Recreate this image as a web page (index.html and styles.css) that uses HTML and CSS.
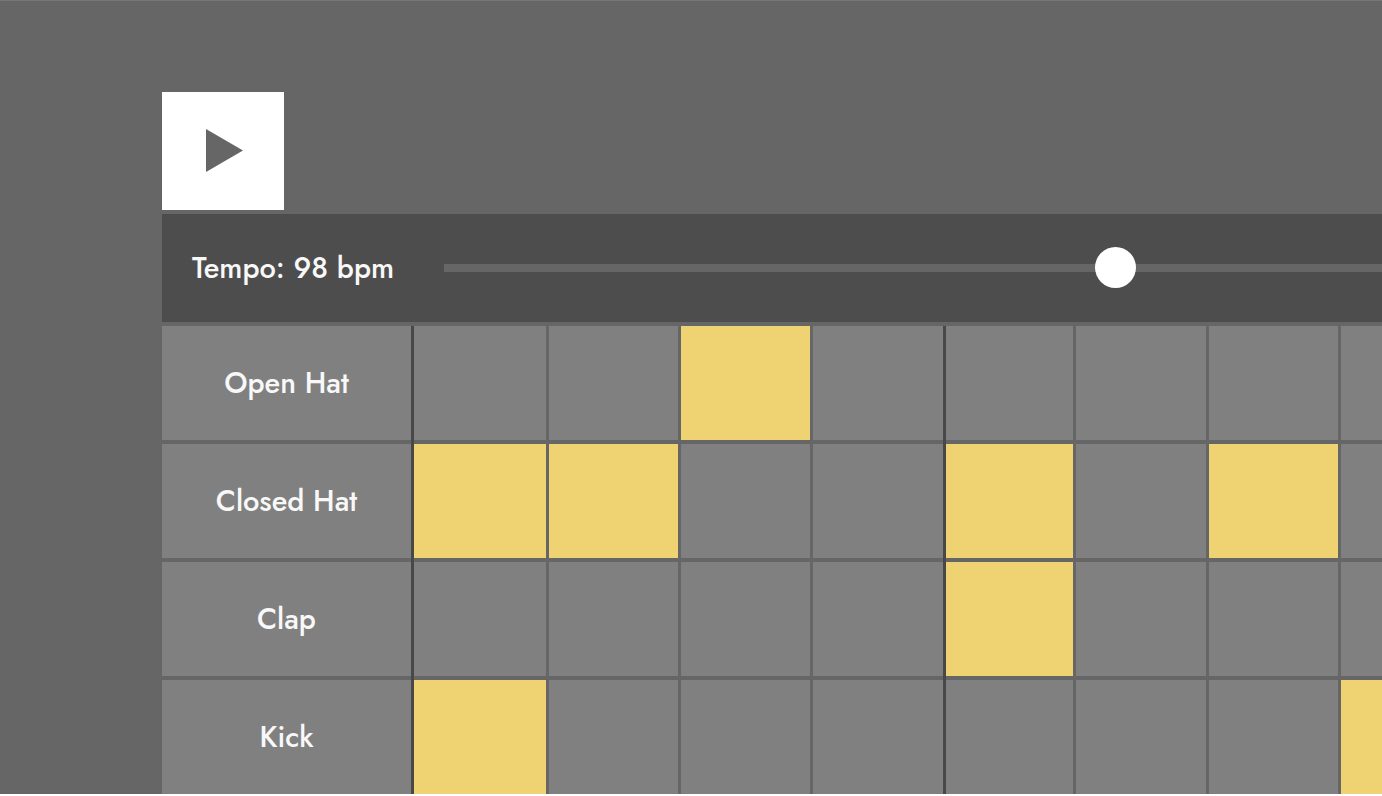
FILE: index.html
```html
<!DOCTYPE html>
<html lang="en">
<head>
<meta charset="utf-8">
<title>Drum Machine</title>
<link rel="stylesheet" href="styles.css">
</head>
<body>
<main class="machine">
  <button class="play" type="button" aria-label="Play">
    <svg class="play-icon" viewBox="0 0 37 43" aria-hidden="true"><path d="M0 0 37 21.5 0 43Z"/></svg>
  </button>
  <div class="tempo">
    <label class="tempo-label" for="tempo">Tempo: 98 bpm</label>
    <input class="tempo-slider" id="tempo" type="range" min="0" max="135" value="98">
  </div>
  <div class="grid">
    <div class="name">Open Hat</div>
    <button class="step beat" type="button" aria-label="Open Hat 1"></button>
    <button class="step" type="button" aria-label="Open Hat 2"></button>
    <button class="step on" type="button" aria-label="Open Hat 3"></button>
    <button class="step" type="button" aria-label="Open Hat 4"></button>
    <button class="step beat" type="button" aria-label="Open Hat 5"></button>
    <button class="step" type="button" aria-label="Open Hat 6"></button>
    <button class="step" type="button" aria-label="Open Hat 7"></button>
    <button class="step" type="button" aria-label="Open Hat 8"></button>

    <div class="name">Closed Hat</div>
    <button class="step beat on" type="button" aria-label="Closed Hat 1"></button>
    <button class="step on" type="button" aria-label="Closed Hat 2"></button>
    <button class="step" type="button" aria-label="Closed Hat 3"></button>
    <button class="step" type="button" aria-label="Closed Hat 4"></button>
    <button class="step beat on" type="button" aria-label="Closed Hat 5"></button>
    <button class="step" type="button" aria-label="Closed Hat 6"></button>
    <button class="step on" type="button" aria-label="Closed Hat 7"></button>
    <button class="step" type="button" aria-label="Closed Hat 8"></button>

    <div class="name">Clap</div>
    <button class="step beat" type="button" aria-label="Clap 1"></button>
    <button class="step" type="button" aria-label="Clap 2"></button>
    <button class="step" type="button" aria-label="Clap 3"></button>
    <button class="step" type="button" aria-label="Clap 4"></button>
    <button class="step beat on" type="button" aria-label="Clap 5"></button>
    <button class="step" type="button" aria-label="Clap 6"></button>
    <button class="step" type="button" aria-label="Clap 7"></button>
    <button class="step" type="button" aria-label="Clap 8"></button>

    <div class="name">Kick</div>
    <button class="step beat on" type="button" aria-label="Kick 1"></button>
    <button class="step" type="button" aria-label="Kick 2"></button>
    <button class="step" type="button" aria-label="Kick 3"></button>
    <button class="step" type="button" aria-label="Kick 4"></button>
    <button class="step beat" type="button" aria-label="Kick 5"></button>
    <button class="step" type="button" aria-label="Kick 6"></button>
    <button class="step" type="button" aria-label="Kick 7"></button>
    <button class="step on" type="button" aria-label="Kick 8"></button>
  </div>
</main>
</body>
</html>
```

FILE: styles.css
```css
* {
  box-sizing: border-box;
}

body {
  margin: 0;
  background: #fff;
  color: #f8f8f8;
  font-family: Futura, "Futura PT", Jost, Lato, sans-serif;
  font-size: 29px;
  font-weight: 500;
  line-height: 36px;
}

.machine {
  display: flex;
  flex-direction: column;
  gap: 4px;
  padding: 91px 0 0 162px;
  border-top: 1px solid #777;
  background: #666;
  overflow: hidden;
}

.play {
  display: flex;
  align-items: center;
  justify-content: center;
  width: 122px;
  height: 118px;
  padding: 0 0 2px 2px;
  border: 0;
  background: #fff;
}

.play-icon {
  width: 37px;
  height: 43px;
  fill: #666;
}

.tempo {
  display: flex;
  align-items: center;
  height: 108px;
  padding-left: 30px;
  background: #4d4d4d;
}

.tempo-label {
  flex: none;
  width: 252px;
}

.tempo-slider {
  flex: 1;
  min-width: 0;
  height: 42px;
  margin: 0;
  background: transparent;
  appearance: none;
}

.tempo-slider::-webkit-slider-runnable-track {
  height: 8px;
  background: #666;
}

.tempo-slider::-webkit-slider-thumb {
  width: 41px;
  height: 41px;
  margin-top: -17px;
  border-radius: 50%;
  background: #fff;
  appearance: none;
}

.grid {
  display: grid;
  grid-template-columns:
    minmax(0, 249fr)
    minmax(0, 132fr) minmax(0, 129fr) minmax(0, 129fr) minmax(0, 130fr)
    minmax(0, 127fr) minmax(0, 130fr) minmax(0, 129fr) minmax(0, 41fr);
  grid-auto-rows: 114px;
  gap: 4px 3px;
}

.name {
  display: flex;
  align-items: center;
  justify-content: center;
  background: #808080;
}

.step {
  position: relative;
  padding: 0;
  border: 0;
  background: #808080;
}

.step.on {
  background: #efd272;
}

/* Dark rule that marks the start of each beat */
.beat::before {
  content: "";
  position: absolute;
  top: 0;
  bottom: -4px;
  left: -3px;
  width: 3px;
  background: #484848;
}
```
